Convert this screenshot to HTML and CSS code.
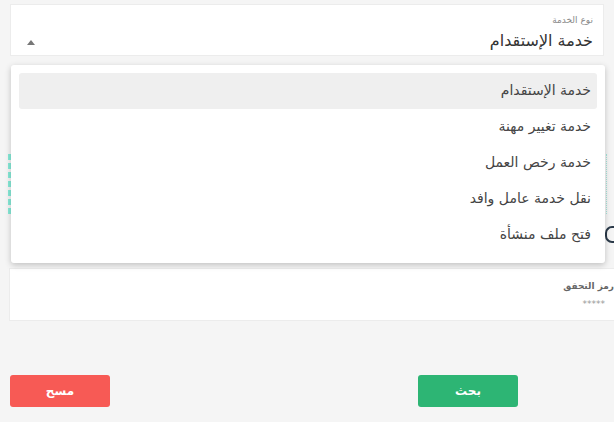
FILE: index.html
```html
<!DOCTYPE html>
<html lang="ar" dir="rtl">
<head>
<meta charset="utf-8">
<link rel="stylesheet" href="styles.css">
</head>
<body>
<div class="page">
  <div class="field">
    <div class="label">نوع الخدمة</div>
    <div class="value-row">
      <span class="value">خدمة الإستقدام</span>
      <span class="caret"></span>
    </div>
  </div>

  <div class="behind">
    <div class="captcha">
      <span class="glyph"></span>
    </div>
  </div>

  <div class="code-card">
    <div class="code-label">رمز التحقق</div>
    <div class="code-value">*****</div>
  </div>

  <div class="actions">
    <button class="btn btn-search">بحث</button>
    <button class="btn btn-clear">مسح</button>
  </div>

  <ul class="menu">
    <li class="item active">خدمة الإستقدام</li>
    <li class="item">خدمة تغيير مهنة</li>
    <li class="item">خدمة رخص العمل</li>
    <li class="item">نقل خدمة عامل وافد</li>
    <li class="item">فتح ملف منشأة</li>
  </ul>
</div>
</body>
</html>
```

FILE: styles.css
```css
html, body {
  margin: 0;
  padding: 0;
  background: #f5f5f5;
  overflow: hidden;
}
body {
  font-family: "DejaVu Sans", "Noto Sans", sans-serif;
  direction: rtl;
  width: 614px;
  height: 422px;
}
.page {
  position: relative;
  padding: 4px 10px 0 10px;
}
.field {
  background: #fff;
  border: 1px solid #ececec;
  height: 52px;
  box-sizing: border-box;
  padding: 9px 10px 0 12px;
}
.label {
  font-size: 9px;
  color: #8a8a8a;
  line-height: 12px;
}
.value-row {
  display: flex;
  justify-content: space-between;
  align-items: center;
  margin-top: 5px;
}
.value {
  font-size: 16px;
  color: #333;
  line-height: 20px;
}
.caret {
  width: 0;
  height: 0;
  border-left: 4px solid transparent;
  border-right: 4px solid transparent;
  border-bottom: 5px solid #777;
  margin-left: 4px;
  margin-top: 2px;
}
.behind {
  height: 212px;
  box-sizing: border-box;
  padding-top: 98px;
  margin-left: -2px;
  margin-right: -3px;
}
.captcha {
  position: relative;
  height: 60px;
  border-left: 3px dashed #86ead8;
  border-right: 1px dotted #a6e6dc;
}
.glyph {
  position: absolute;
  left: 594px;
  top: 72px;
  width: 9px;
  height: 13px;
  border: 2px solid #2b3a4a;
  border-right: none;
  border-radius: 7px 0 0 7px;
}
.code-card {
  background: #fff;
  border: 1px solid #ececec;
  height: 53px;
  box-sizing: border-box;
  margin-left: -1px;
  margin-right: -12px;
  padding: 10px 10px 0 0;
}
.code-label {
  font-size: 9px;
  font-weight: bold;
  color: #666;
  line-height: 14px;
  margin-right: -9px;
}
.code-value {
  font-size: 9px;
  color: #999;
  line-height: 14px;
  margin-top: 4px;
}
.actions {
  display: flex;
  justify-content: space-between;
  padding-right: 86px;
  margin-top: 54px;
}
.btn {
  width: 100px;
  height: 32px;
  border: none;
  border-radius: 3px;
  color: #fff;
  font-family: "DejaVu Sans", sans-serif;
  font-weight: bold;
  font-size: 12px;
  padding: 0;
}
.btn-search {
  background: #2db574;
}
.btn-clear {
  background: #f75a55;
}
.menu {
  position: absolute;
  top: 65px;
  left: 11px;
  width: 594px;
  height: 198px;
  box-sizing: border-box;
  margin: 0;
  padding: 8px;
  list-style: none;
  background: #fff;
  border-radius: 3px;
  box-shadow: 0 2px 6px rgba(0, 0, 0, 0.22);
}
.item {
  height: 36px;
  line-height: 34px;
  padding-right: 6px;
  font-size: 14px;
  color: #444;
  border-radius: 3px;
}
.item.active {
  background: #efefef;
}
```
